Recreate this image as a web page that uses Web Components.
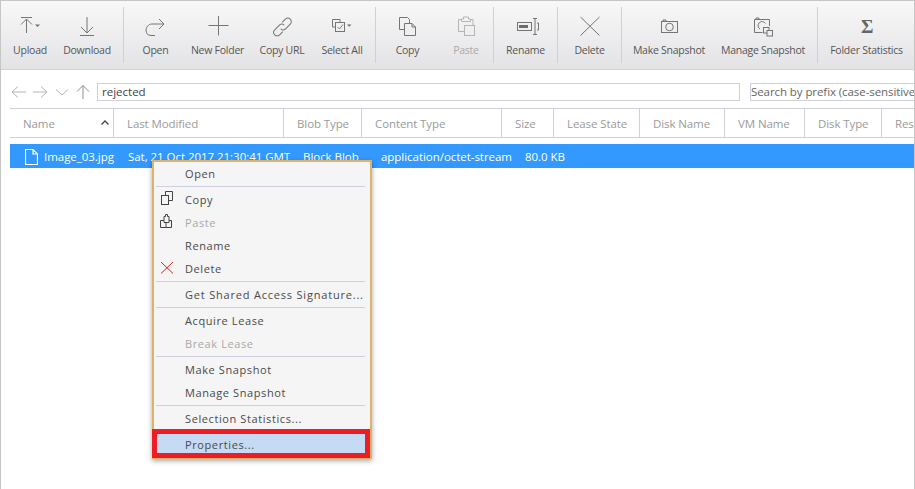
<!DOCTYPE html>
<html>
<head>
<meta charset="utf-8">
<title>Blob Containers</title>
<style>
  html, body { margin: 0; padding: 0; overflow: hidden; background: #fff; }
  body { font-family: "Open Sans", sans-serif; }
</style>
</head>
<body>
<explorer-app>
  <tool-bar>
    <tool-btn label="Upload" w="58">
      <svg viewBox="0 0 40 32"><path d="M11 8.500H22M16.500 24V10M11 15.500L16.500 10L22 15.500"/><path class="fill" d="M25 15.500h5l-2.500 2.500z"/></svg>
    </tool-btn>
    <tool-btn label="Download" w="56">
      <svg viewBox="0 0 40 32"><path d="M20 8V24M14 18L20 24L26 18M13 26.500H27"/></svg>
    </tool-btn>
    <tool-sep style="margin-left:8px"></tool-sep>
    <tool-btn label="Open" w="63">
      <svg viewBox="0 0 40 32"><path d="M28 15H16C12 15 10 19 10 21C10 24.500 12 26.500 15 26.500H19M23 10L28 15L23 20"/></svg>
    </tool-btn>
    <tool-btn label="New Folder" w="61">
      <svg viewBox="0 0 40 32"><path d="M20.500 7V26.500M10.500 16.500H30.500"/></svg>
    </tool-btn>
    <tool-btn label="Copy URL" w="68">
      <svg viewBox="0 0 40 32"><g transform="rotate(45 20.500 18)"><path d="M17 15V10.500a3.500 3.500 0 0 1 7 0V17.500a3 3 0 0 1-3.500 3"/><path d="M24 21V25.500a3.500 3.500 0 0 1-7 0V18.500a3 3 0 0 1 3.500-3"/></g></svg>
    </tool-btn>
    <tool-btn label="Select All" w="52">
      <svg viewBox="0 0 40 32"><path d="M13 18H10.500V10.500H18V13"/><rect x="13.500" y="13.500" width="9" height="9"/><path stroke-width=".9" d="M15.500 18L17.500 20L21 15.500"/><path class="fill" d="M25 15.500h4.500l-2.250 2.250z"/></svg>
    </tool-btn>
    <tool-sep style="margin-left:7px"></tool-sep>
    <tool-btn label="Copy" w="63">
      <svg viewBox="0 0 40 32"><path d="M16 20.500H11.500V8.500H19.500L21.500 10.500V14"/><path d="M16.500 14.500H24L27.500 18V26.500H16.500ZM24 14.500V18H27.500"/></svg>
    </tool-btn>
    <tool-btn label="Paste" w="54" disabled>
      <svg viewBox="0 0 40 32"><path d="M18 22.500H12.500V10.500H15.500M24.500 10.500H27V16"/><path d="M15.500 12.500V10H17.500V8H22.500V10H24.500V12.500Z"/><rect x="18.500" y="16.500" width="10" height="10"/></svg>
    </tool-btn>
    <tool-sep></tool-sep>
    <tool-btn label="Rename" w="63">
      <svg viewBox="0 0 40 32"><rect x="11.500" y="13.500" width="14" height="8"/><rect class="fill" x="13" y="16" width="9" height="3"/><path d="M27 9.500H31M27 25.500H31M29 9.500V25.500"/><path d="M31 14H32.500V21H31"/></svg>
    </tool-btn>
    <tool-sep></tool-sep>
    <tool-btn label="Delete" w="63">
      <svg viewBox="0 0 40 32"><path d="M10.500 8L29.500 26.500M29.500 8L10.500 26.500"/></svg>
    </tool-btn>
    <tool-sep></tool-sep>
    <tool-btn label="Make Snapshot" w="94">
      <svg viewBox="0 0 40 32"><rect x="12.500" y="12.500" width="16" height="11"/><circle cx="20.500" cy="18" r="3.800"/><path d="M14 12.500V11H17V12.500"/></svg>
    </tool-btn>
    <tool-btn label="Manage Snapshot" w="94">
      <svg viewBox="0 0 40 32"><path d="M19.500 23.500H11.500V10.500H26.500V17"/><path d="M13 10.500V9H16V10.500"/><path d="M22.500 14.500A4 4 0 1 0 17 20"/><rect x="20.500" y="18.500" width="5.500" height="5.500"/><rect x="24" y="21.500" width="5.500" height="5.500" style="fill:#eee"/></svg>
    </tool-btn>
    <tool-sep style="margin-left:7px"></tool-sep>
    <tool-btn label="Folder Statistics" w="97">
      <svg viewBox="0 0 40 32"><text x="20" y="24" text-anchor="middle" style="font:bold 19px 'Liberation Serif',serif;fill:#666;stroke:none">Σ</text></svg>
    </tool-btn>
  </tool-bar>

  <address-bar path="rejected" search="Search by prefix (case-sensitive)"></address-bar>

  <column-header>
    <col-cell w="104" pad="13" sort>Name</col-cell>
    <col-cell w="170">Last Modified</col-cell>
    <col-cell w="78">Blob Type</col-cell>
    <col-cell w="140">Content Type</col-cell>
    <col-cell w="52">Size</col-cell>
    <col-cell w="86">Lease State</col-cell>
    <col-cell w="85">Disk Name</col-cell>
    <col-cell w="80">VM Name</col-cell>
    <col-cell w="77">Disk Type</col-cell>
    <col-cell w="60" last>Resource</col-cell>
  </column-header>

  <blob-row>
    <row-cell w="104" pad="34" file>Image_03.jpg</row-cell>
    <row-cell w="170" pad="14">Sat, 21 Oct 2017 21:30:41 GMT</row-cell>
    <row-cell w="78" pad="19">Block Blob</row-cell>
    <row-cell w="140" pad="19">application/octet-stream</row-cell>
    <row-cell w="52" pad="23">80.0 KB</row-cell>
  </blob-row>

  <context-menu>
    <menu-item>Open</menu-item>
    <menu-sep></menu-sep>
    <menu-item>
      <svg slot="icon" viewBox="0 0 16 16"><path d="M7.500 4.500V.5H14.500V9.500H10.500"/><rect x="3.500" y="4.500" width="7" height="9"/></svg>
      Copy
    </menu-item>
    <menu-item disabled>
      <svg slot="icon" viewBox="0 0 16 16"><path d="M2.500 13.500V6.500H6V2.500H7.500V.5H9.500V2.500H11V6.500H13.500V13.500ZM6 6.500V8.500H11V6.500M8 8.500V13.500"/></svg>
      Paste
    </menu-item>
    <menu-item>Rename</menu-item>
    <menu-item>
      <svg slot="icon" viewBox="0 0 16 16" style="stroke:#cc2a1e"><path d="M3 2L15 13.500M15 2L3 13.500"/></svg>
      Delete
    </menu-item>
    <menu-sep></menu-sep>
    <menu-item style="letter-spacing:.8px">Get Shared Access Signature...</menu-item>
    <menu-sep></menu-sep>
    <menu-item>Acquire Lease</menu-item>
    <menu-item disabled>Break Lease</menu-item>
    <menu-sep></menu-sep>
    <menu-item>Make Snapshot</menu-item>
    <menu-item>Manage Snapshot</menu-item>
    <menu-sep></menu-sep>
    <menu-item>Selection Statistics...</menu-item>
    <menu-item marked>Properties...</menu-item>
  </context-menu>
</explorer-app>

<script>
class explorerApp extends HTMLElement {
  constructor(){
    super();
    this.attachShadow({mode:"open"});
  }
  connectedCallback(){
    this.shadowRoot.innerHTML = `
      <style>
      :host {
        display: block;
        position: relative;
        box-sizing: border-box;
        width: 915px;
        height: 489px;
        overflow: hidden;
        border: 1px solid #c6c6c6;
        border-bottom: none;
        background: #fff;
        font-family: "Open Sans", sans-serif;
      }
      </style>
      <slot></slot>
    `;
  }
}

class toolBar extends HTMLElement {
  constructor(){
    super();
    this.attachShadow({mode:"open"});
  }
  connectedCallback(){
    this.shadowRoot.innerHTML = `
      <style>
      :host {
        display: flex;
        align-items: flex-start;
        box-sizing: border-box;
        height: 69px;
        padding-top: 6px;
        background: linear-gradient(#f8f8f8, #e3e3e6);
        border-bottom: 1px solid #d2d2dc;
        overflow: hidden;
      }
      </style>
      <slot></slot>
    `;
  }
}

class toolBtn extends HTMLElement {
  constructor(){
    super();
    this.attachShadow({mode:"open"});
  }
  connectedCallback(){
    const w = this.getAttribute("w");
    this.shadowRoot.innerHTML = `
      <style>
      :host {
        display: flex;
        flex: none;
        flex-direction: column;
        align-items: center;
        width: ${w}px;
        color: #555;
        font-size: 10.5px;
        letter-spacing: -.25px;
      }
      :host([disabled]) { color: #aaa; }
      .icon { width: 40px; height: 32px; margin-top: 2px; }
      ::slotted(svg) { display: block; width: 40px; height: 32px; fill: none; stroke: #757575; stroke-width: 1; overflow: visible; }
      :host([disabled]) ::slotted(svg) { stroke: #b5b5b5; }
      .label { margin-top: 2px; line-height: 14px; white-space: nowrap; }
      </style>
      <div class="icon"><slot></slot></div>
      <div class="label">${this.getAttribute("label")}</div>
    `;
    this.querySelectorAll(".fill").forEach(p => { p.style.fill = "#6e6e6e"; p.style.stroke = "none"; });
  }
}

class toolSep extends HTMLElement {
  constructor(){
    super();
    this.attachShadow({mode:"open"});
  }
  connectedCallback(){
    this.shadowRoot.innerHTML = `
      <style>
      :host { display: block; flex: none; width: 1px; height: 56px; background: #d0d0d4; }
      </style>
    `;
  }
}

class addressBar extends HTMLElement {
  constructor(){
    super();
    this.attachShadow({mode:"open"});
  }
  connectedCallback(){
    this.shadowRoot.innerHTML = `
      <style>
      :host {
        display: flex;
        align-items: center;
        box-sizing: border-box;
        height: 38px;
        padding: 5px 0 0 10px;
        overflow: hidden;
      }
      svg { flex: none; width: 85px; height: 18px; fill: none; stroke: #b4b4bc; stroke-width: 1; }
      .box {
        flex: none;
        box-sizing: border-box;
        height: 18px;
        padding-left: 4px;
        border: 1px solid #d0d0dc;
        color: #444;
        font-size: 11.500px;
        line-height: 16px;
        white-space: nowrap;
        overflow: hidden;
      }
      .path { width: 643px; margin-left: 1px; }
      .search { width: 170px; margin-left: 10px; padding-left: 0; color: #666; border-right: none; letter-spacing: -.08px; }
      </style>
      <svg viewBox="0 0 85 18">
        <path d="M1 9H15M7 3.500L1 9L7 14.500"/>
        <path d="M22 9H36M30 3.500L36 9L30 14.500"/>
        <path d="M45 6.500L51 12L57 6.500"/>
        <path d="M72 2.500V16M66 8.500L72 2.500L78 8.500" stroke="#8e8e96"/>
      </svg>
      <div class="box path">${this.getAttribute("path")}</div>
      <div class="box search">${this.getAttribute("search")}</div>
    `;
  }
}

class columnHeader extends HTMLElement {
  constructor(){
    super();
    this.attachShadow({mode:"open"});
  }
  connectedCallback(){
    this.shadowRoot.innerHTML = `
      <style>
      :host {
        display: flex;
        box-sizing: border-box;
        height: 30px;
        margin-left: 9px;
        border-top: 1px solid #d0d0dc;
        border-bottom: 1px solid #d0d0dc;
        overflow: hidden;
      }
      </style>
      <slot></slot>
    `;
  }
}

class colCell extends HTMLElement {
  constructor(){
    super();
    this.attachShadow({mode:"open"});
  }
  connectedCallback(){
    const pad = this.getAttribute("pad") || "13";
    const caret = this.hasAttribute("sort")
      ? `<svg viewBox="0 0 8 5"><path d="M.5 4.500L4 1L7.500 4.500"/></svg>` : "";
    this.shadowRoot.innerHTML = `
      <style>
      :host {
        display: flex;
        flex: none;
        align-items: center;
        position: relative;
        box-sizing: border-box;
        width: ${this.getAttribute("w")}px;
        padding-left: ${pad}px;
        border-right: 1px solid #d0d0dc;
        color: #9a9a9a;
        font-size: 11.500px;
        letter-spacing: -.1px;
        white-space: nowrap;
      }
      :host([last]) { border-right: none; }
      svg { position: absolute; right: 4px; top: 11px; width: 8px; height: 5px; fill: none; stroke: #444; stroke-width: 1.300; }
      </style>
      <slot></slot>${caret}
    `;
  }
}

class blobRow extends HTMLElement {
  constructor(){
    super();
    this.attachShadow({mode:"open"});
  }
  connectedCallback(){
    this.shadowRoot.innerHTML = `
      <style>
      :host {
        display: flex;
        box-sizing: border-box;
        height: 24px;
        margin: 6px 0 0 9px;
        background: #3399ff;
      }
      </style>
      <slot></slot>
    `;
  }
}

class rowCell extends HTMLElement {
  constructor(){
    super();
    this.attachShadow({mode:"open"});
  }
  connectedCallback(){
    const icon = this.hasAttribute("file")
      ? `<svg viewBox="0 0 13 16"><path d="M.5.500H8L12.500 5V15.500H.5ZM8 .5V5H12.500"/></svg>` : "";
    this.shadowRoot.innerHTML = `
      <style>
      :host {
        display: flex;
        flex: none;
        align-items: center;
        position: relative;
        box-sizing: border-box;
        width: ${this.getAttribute("w")}px;
        padding-left: ${this.getAttribute("pad")}px;
        color: #fff;
        font-size: 11.500px;
        letter-spacing: -.04px;
        white-space: nowrap;
      }
      svg { position: absolute; left: 15px; top: 5px; width: 13px; height: 16px; fill: none; stroke: #fff; stroke-width: 1.200; }
      </style>
      ${icon}<slot></slot>
    `;
  }
}

class contextMenu extends HTMLElement {
  constructor(){
    super();
    this.attachShadow({mode:"open"});
  }
  connectedCallback(){
    this.shadowRoot.innerHTML = `
      <style>
      :host {
        display: block;
        position: absolute;
        left: 151px;
        top: 159px;
        box-sizing: border-box;
        width: 220px;
        height: 299px;
        padding: 0 0 0 1px;
        background: #f5f5f5;
        border: 2px solid #e0b268;
        box-shadow: 0 2px 5px rgba(0,0,0,.35);
      }
      </style>
      <slot></slot>
    `;
  }
}

class menuItem extends HTMLElement {
  constructor(){
    super();
    this.attachShadow({mode:"open"});
  }
  connectedCallback(){
    this.shadowRoot.innerHTML = `
      <style>
      :host {
        display: flex;
        align-items: center;
        position: relative;
        box-sizing: border-box;
        height: 23px;
        padding-left: 30px;
        color: #4a4a4a;
        font-size: 11px;
        letter-spacing: .6px;
        white-space: nowrap;
      }
      :host([disabled]) { color: #a8a8a8; }
      :host([marked]) {
        height: 29px;
        margin: -1px 0 0 -3px;
        padding-left: 28px;
        padding-top: 1px;
        background: #c5daf3;
        border: 5px solid #ee1c25;
      }
      .icon { position: absolute; left: 3px; top: 3px; width: 16px; height: 16px; }
      ::slotted(svg) { display: block; width: 16px; height: 16px; fill: none; stroke: #444; stroke-width: 1; }
      </style>
      <div class="icon"><slot name="icon"></slot></div>
      <slot></slot>
    `;
  }
}

class menuSep extends HTMLElement {
  constructor(){
    super();
    this.attachShadow({mode:"open"});
  }
  connectedCallback(){
    this.shadowRoot.innerHTML = `
      <style>
      :host { display: block; height: 1px; margin: 1px 5px 1px 1px; background: #cfcfde; }
      </style>
    `;
  }
}

customElements.define("explorer-app", explorerApp);
customElements.define("tool-bar", toolBar);
customElements.define("tool-btn", toolBtn);
customElements.define("tool-sep", toolSep);
customElements.define("address-bar", addressBar);
customElements.define("column-header", columnHeader);
customElements.define("col-cell", colCell);
customElements.define("blob-row", blobRow);
customElements.define("row-cell", rowCell);
customElements.define("context-menu", contextMenu);
customElements.define("menu-item", menuItem);
customElements.define("menu-sep", menuSep);
</script>
</body>
</html>
